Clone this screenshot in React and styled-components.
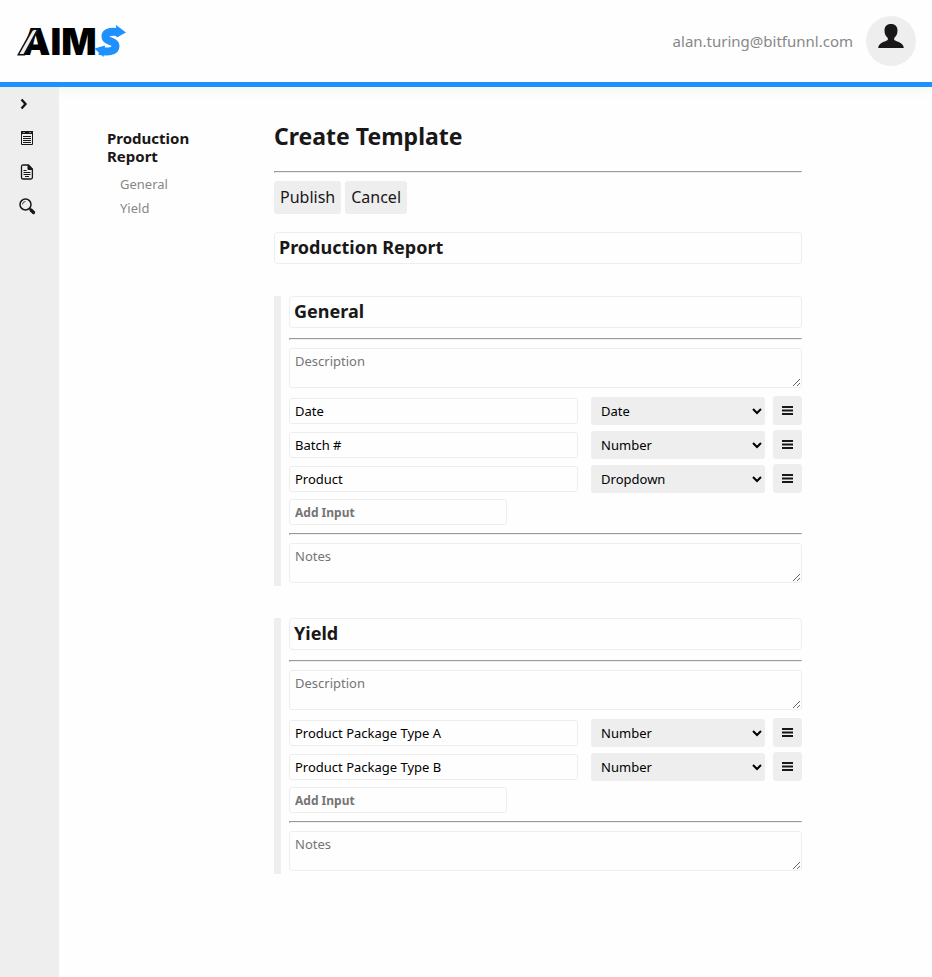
import React from "react";
import styled, { createGlobalStyle } from "styled-components";

const GlobalStyle = createGlobalStyle`
  *, *::before, *::after { box-sizing: border-box; }
  body {
    margin: 0;
    background: #fefefe;
    color: #191718;
    font-family: "Noto Sans", sans-serif;
    font-size: 16px;
  }
  button, input, select, textarea { font-family: inherit; margin: 0; }
`;

const Page = styled.div`
  display: flex;
  flex-direction: column;
  min-height: 100vh;
`;

const Header = styled.header`
  display: flex;
  align-items: center;
  justify-content: space-between;
  padding: 16px;
  border-bottom: 5px solid #1e90ff;
  box-shadow: 0 4px 12px rgba(0, 0, 0, 0.04);
`;

const LogoLink = styled.a`
  display: flex;
`;

const Account = styled.div`
  display: flex;
  align-items: center;
  gap: 13px;
  color: #888;
  font-size: 15px;
`;

const Avatar = styled.button`
  display: flex;
  align-items: center;
  justify-content: center;
  width: 50px;
  height: 50px;
  padding: 0 0 10px;
  border: 0;
  border-radius: 50%;
  background: #eee;
  color: #191718;
`;

const Body = styled.div`
  display: flex;
  flex: 1;
`;

const Sidebar = styled.nav`
  display: flex;
  flex-direction: column;
  flex: none;
  width: 59px;
  padding-left: 19px;
  background: #eee;
`;

const SideButton = styled.button`
  display: flex;
  align-items: center;
  width: 24px;
  height: 34px;
  padding: 0;
  border: 0;
  background: none;
  color: #191718;
`;

const Content = styled.div`
  display: grid;
  grid-template-columns: 119px minmax(0, 1fr);
  align-items: start;
  gap: 48px;
  flex: 1;
  padding: 32px 14% 32px 48px;
`;

const Outline = styled.nav`
  padding-top: 10px;
`;

const OutlineTitle = styled.h2`
  margin: 0 0 7px;
  font-size: 15px;
  line-height: 18px;
`;

const OutlineList = styled.ul`
  margin: 0;
  padding: 0 0 0 13px;
  list-style: none;
  font-size: 13px;
  line-height: 24px;
`;

const OutlineLink = styled.a`
  color: #888;
  text-decoration: none;
`;

const Heading = styled.h1`
  margin: 0 0 18px;
  font-size: 23px;
  line-height: 34px;
`;

const Rule = styled.hr`
  width: 100%;
  margin: ${(p) => p.$top || 8}px 0 8px;
`;

const Actions = styled.div`
  display: flex;
  gap: 4px;
  margin-bottom: 18px;
`;

const ActionButton = styled.button`
  height: 33px;
  padding: 0 6px 2px;
  border: 0;
  border-radius: 3px;
  background: #eee;
  color: #191718;
  font-size: 16px;
`;

const TitleInput = styled.input`
  display: block;
  width: 100%;
  height: 32px;
  padding: 0 4px 2px;
  border: 1px solid #eee;
  border-radius: 4px;
  background: #fefefe;
  color: #191718;
  font-size: 18px;
  font-weight: 700;
`;

const Section = styled.section`
  margin-top: 32px;
  padding: 0 0 3px 8px;
  border-left: 7px solid #eee;
`;

const NoteArea = styled.textarea`
  display: block;
  width: 100%;
  height: 40px;
  padding: 3px 5px;
  border: 1px solid #eee;
  border-radius: 3px;
  background: #fefefe;
  font-size: 13px;
  line-height: 18px;
  resize: vertical;
  &::placeholder { color: #757575; }
`;

const Rows = styled.div`
  display: grid;
  gap: 5px;
  margin: 8px 0 6px;
`;

const Row = styled.div`
  display: grid;
  grid-template-columns: minmax(0, 1fr) 29px;
  align-items: center;
  gap: 8px;
`;

const RowFields = styled.div`
  display: grid;
  grid-template-columns: minmax(0, 5fr) minmax(0, 3fr);
  align-items: center;
  gap: 13px;
`;

const TextInput = styled.input`
  display: block;
  width: 100%;
  height: 26px;
  padding: 0 5px;
  border: 1px solid #eee;
  border-radius: 3px;
  background: #fefefe;
  color: #000;
  font-size: 13px;
`;

const AddInput = styled(TextInput)`
  width: 218px;
  max-width: 100%;
  font-size: 12px;
  font-weight: 700;
  &::placeholder { color: #757575; }
`;

const TypeSelect = styled.select`
  width: 100%;
  height: 28px;
  padding: 0 0 0 6px;
  border: 0;
  border-radius: 3px;
  background: #eee;
  color: #000;
  font-size: 13px;
`;

const MenuButton = styled.button`
  display: flex;
  align-items: center;
  justify-content: center;
  width: 29px;
  height: 29px;
  padding: 0;
  border: 0;
  border-radius: 3px;
  background: #eee;
  color: #191718;
`;

const LogoText = styled.text`
  font-family: "Inter", sans-serif;
  font-size: 37px;
  font-weight: 900;
`;

const Logo = () => (
  <svg width="112" height="50" viewBox="0 0 112 50" role="img" aria-label="AIMS">
    <LogoText x="5" y="39">AIM</LogoText>
    <path d="M1 39.500 15.500 13.500q.6-1 2-1h6L9 39.500z" fill="#111" />
    <path d="M3.500 38 16.500 15q.8-1 2.500-1h1.500L7.500 38z" fill="#eee" />
    <path d="M104 17C98 14.500 89 15.500 89.500 21C90 26.500 99.500 24 99.500 30C99.500 36 92 36 83 35" fill="none" stroke="#1e90ff" strokeWidth="8" />
    <path d="M100 9 110 16.500 100.500 21.500zM78.500 32.500 89 29.500 87.500 41z" fill="#1e90ff" />
  </svg>
);

const PersonIcon = () => (
  <svg width="26" height="26" viewBox="0 0 26 26" fill="currentColor" aria-hidden="true">
    <path d="M13 1c4.300 0 6.500 2.500 6.500 6.500 0 3.500-1.300 5.800-3.300 7.500v2c2 1.600 9.600 2.500 9.600 8H.2c0-5.500 7.600-6.400 9.600-8v-2c-2-1.700-3.300-4-3.300-7.500C6.500 3.500 8.700 1 13 1z" />
  </svg>
);

const ChevronIcon = () => (
  <svg width="10" height="12" viewBox="0 0 10 12" fill="none" stroke="currentColor" strokeWidth="2.400" aria-hidden="true">
    <path d="M2.500 1.500 6.500 6l-4 4.500" />
  </svg>
);

const FormIcon = () => (
  <svg width="16" height="16" viewBox="0 0 16 16" fill="none" stroke="currentColor" aria-hidden="true">
    <path d="M2.500 1.500h11v13h-11z" />
    <path d="M2 2.500h12" strokeWidth="3" />
    <path d="M4 2.500h2M10 2.500h2" stroke="#888" />
    <path d="M4 6.500h8M4 8.500h8M4 10.500h8M4 12.500h8" />
  </svg>
);

const DocumentIcon = () => (
  <svg width="16" height="16" viewBox="0 0 16 16" fill="none" stroke="currentColor" aria-hidden="true">
    <path d="M4 1h5.500L13.400 5v8.500q0 1.500-1.500 1.500H4q-1.500 0-1.500-1.500v-11Q2.500 1 4 1z" strokeWidth="1.300" />
    <path d="M9 1v4.500h4.500z" fill="currentColor" />
    <path d="M4.500 6.500h3M4.500 8.500h7M4.500 10.500h7M6 12.500h4" />
  </svg>
);

const SearchIcon = () => (
  <svg width="17" height="17" viewBox="0 0 17 17" fill="none" stroke="currentColor" aria-hidden="true">
    <circle cx="6.500" cy="6.500" r="5.500" strokeWidth="1.500" />
    <path d="M3.500 6.500q0-3 3-3" strokeWidth=".8" />
    <path d="m10.300 10.300 1.500 1.500" strokeWidth="1.500" />
    <path d="m12 12 2.500 2.500" strokeWidth="3.200" strokeLinecap="round" />
  </svg>
);

const MenuIcon = () => (
  <svg width="11" height="11" viewBox="0 0 11 11" stroke="currentColor" strokeWidth="2" aria-hidden="true">
    <path d="M0 2h11M0 5.500h11M0 9h11" />
  </svg>
);

const TYPES = ["Date", "Number", "Dropdown", "Text"];

const SECTIONS = [
  {
    title: "General",
    inputs: [
      { name: "Date", type: "Date" },
      { name: "Batch #", type: "Number" },
      { name: "Product", type: "Dropdown" },
    ],
  },
  {
    title: "Yield",
    inputs: [
      { name: "Product Package Type A", type: "Number" },
      { name: "Product Package Type B", type: "Number" },
    ],
  },
];

const SIDE_ITEMS = [
  { label: "Expand menu", Icon: ChevronIcon },
  { label: "Templates", Icon: FormIcon },
  { label: "Reports", Icon: DocumentIcon },
  { label: "Search", Icon: SearchIcon },
];

const InputRow = ({ name, type }) => (
  <Row>
    <RowFields>
      <TextInput aria-label="Input name" defaultValue={name} />
      <TypeSelect aria-label={`${name} type`} defaultValue={type}>
        {TYPES.map((t) => (
          <option key={t}>{t}</option>
        ))}
      </TypeSelect>
    </RowFields>
    <MenuButton type="button" aria-label={`${name} options`}>
      <MenuIcon />
    </MenuButton>
  </Row>
);

const TemplateSection = ({ title, inputs }) => (
  <Section id={title.toLowerCase()}>
    <TitleInput aria-label="Section title" defaultValue={title} />
    <Rule $top={10} />
    <NoteArea aria-label={`${title} description`} placeholder="Description" />
    <Rows>
      {inputs.map((input) => (
        <InputRow key={input.name} {...input} />
      ))}
    </Rows>
    <AddInput aria-label={`Add input to ${title}`} placeholder="Add Input" />
    <Rule />
    <NoteArea aria-label={`${title} notes`} placeholder="Notes" />
  </Section>
);

export default function App() {
  return (
    <Page>
      <GlobalStyle />
      <Header>
        <LogoLink href="#" aria-label="AIMS home">
          <Logo />
        </LogoLink>
        <Account>
          <span>alan.turing@bitfunnl.com</span>
          <Avatar type="button" aria-label="Account">
            <PersonIcon />
          </Avatar>
        </Account>
      </Header>
      <Body>
        <Sidebar aria-label="Main">
          {SIDE_ITEMS.map(({ label, Icon }) => (
            <SideButton key={label} type="button" aria-label={label}>
              <Icon />
            </SideButton>
          ))}
        </Sidebar>
        <Content>
          <Outline aria-label="Template outline">
            <OutlineTitle>Production Report</OutlineTitle>
            <OutlineList>
              {SECTIONS.map(({ title }) => (
                <li key={title}>
                  <OutlineLink href={`#${title.toLowerCase()}`}>{title}</OutlineLink>
                </li>
              ))}
            </OutlineList>
          </Outline>
          <main>
            <Heading>Create Template</Heading>
            <Rule />
            <Actions>
              <ActionButton type="button">Publish</ActionButton>
              <ActionButton type="button">Cancel</ActionButton>
            </Actions>
            <TitleInput aria-label="Template title" defaultValue="Production Report" />
            {SECTIONS.map((section) => (
              <TemplateSection key={section.title} {...section} />
            ))}
          </main>
        </Content>
      </Body>
    </Page>
  );
}
